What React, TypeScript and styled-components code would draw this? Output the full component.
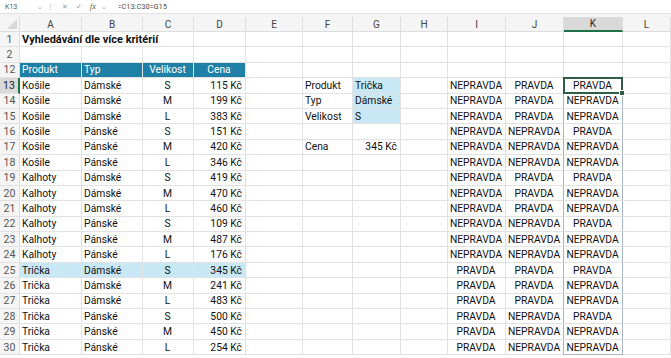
import styled, { createGlobalStyle, css } from "styled-components";

const Global = createGlobalStyle`
  html, body { margin: 0; padding: 0; background: #fff; }
  body { font-family: Roboto, "Liberation Sans", sans-serif; }
`;

const COLS = "20px 62px 61px 51px 52px 57px 50px 48px 47px 58px 58px 59px 1fr";
const ROW_H = "15.4px";

const Sheet = styled.div`
  width: 671px;
  height: 358px;
  overflow: hidden;
  background: #fff;
  display: flex;
  flex-direction: column;
`;

const FormulaBar = styled.div`
  height: 13px;
  display: flex;
  align-items: center;
  border-bottom: 1px solid #e3e3e3;
  font-size: 7px;
  color: #444;
  background: #fff;
`;

const NameBox = styled.div`
  width: 38px;
  padding-left: 5px;
  display: flex;
  align-items: center;
  justify-content: space-between;
  color: #555;
`;

const BarIcon = styled.span<{ $italic?: boolean }>`
  color: #9a9a9a;
  font-size: 7px;
  margin: 0 4px;
  ${(p) =>
    p.$italic &&
    css`
      font-family: "Liberation Serif", serif;
      font-style: italic;
      color: #555;
      font-size: 8px;
      margin-right: 1px;
    `}
`;

const Formula = styled.span`
  margin-left: 7px;
  color: #444;
  letter-spacing: 0.2px;
`;

const Strip = styled.div`
  height: 3px;
  background: #f4f4f4;
`;

const Grid = styled.div`
  display: flex;
  flex-direction: column;
`;

const Row = styled.div`
  display: grid;
  grid-template-columns: ${COLS};
  height: ${ROW_H};
`;

const HeadRow = styled(Row)`
  height: 15px;
`;

const ColHead = styled.div<{ $sel?: boolean }>`
  background: ${(p) => (p.$sel ? "#d9d9d9" : "#f5f5f5")};
  border-right: 1px solid #dddddd;
  border-bottom: ${(p) => (p.$sel ? "2px solid #1e7145" : "1px solid #dddddd")};
  box-sizing: border-box;
  display: flex;
  align-items: center;
  justify-content: center;
  font-size: 10px;
  color: ${(p) => (p.$sel ? "#222" : "#444")};
`;

const Corner = styled.div`
  background: #f5f5f5;
  border-right: 1px solid #dddddd;
  border-bottom: 1px solid #dddddd;
  box-sizing: border-box;
  position: relative;
  &::after {
    content: "";
    position: absolute;
    right: 2px;
    bottom: 2px;
    width: 0;
    height: 0;
    border-left: 10px solid transparent;
    border-bottom: 10px solid #d8d8d8;
  }
`;

const RowHead = styled.div<{ $sel?: boolean }>`
  background: ${(p) => (p.$sel ? "#d9d9d9" : "#f5f5f5")};
  border-right: ${(p) => (p.$sel ? "2px solid #1e7145" : "1px solid #dddddd")};
  border-bottom: 1px solid #e2e2e2;
  box-sizing: border-box;
  display: flex;
  align-items: center;
  justify-content: center;
  font-size: 10.5px;
  color: ${(p) => (p.$sel ? "#222" : "#555")};
`;

type Align = "left" | "center" | "right";

const Cell = styled.div<{
  $align?: Align;
  $bg?: string;
  $color?: string;
  $bold?: boolean;
  $span?: number;
  $outline?: boolean;
  $last?: boolean;
  $active?: boolean;
}>`
  box-sizing: border-box;
  grid-column: span ${(p) => p.$span || 1};
  border-right: 1px solid #e2e2e2;
  border-bottom: 1px solid #e2e2e2;
  background: ${(p) => p.$bg || "#fff"};
  color: ${(p) => p.$color || "#111"};
  font-size: ${(p) => (p.$bold ? "11px" : "10.3px")};
  font-weight: ${(p) => (p.$bold ? 700 : 400)};
  display: flex;
  align-items: center;
  justify-content: ${(p) =>
    p.$align === "center" ? "center" : p.$align === "right" ? "flex-end" : "flex-start"};
  padding: 0 3px 0 2px;
  white-space: nowrap;
  position: relative;
  ${(p) =>
    p.$outline &&
    css`
      border-left: 1px solid #a9b6c6;
      border-right: 1px solid #a9b6c6;
      margin-left: -1px;
    `}
  ${(p) =>
    p.$last &&
    css`
      border-bottom: 1px solid #a9b6c6;
    `}
  ${(p) =>
    p.$active &&
    css`
      &::after {
        content: "";
        position: absolute;
        inset: -1px;
        border: 2px solid #2f5d45;
        pointer-events: none;
      }
      &::before {
        content: "";
        position: absolute;
        right: -3px;
        bottom: -3px;
        width: 4px;
        height: 4px;
        background: #2f5d45;
        border: 1px solid #fff;
        z-index: 2;
      }
    `}
`;

const TEAL = "#1f80a7";
const LIGHT = "#c9e8f5";

const letters = ["A", "B", "C", "D", "E", "F", "G", "H", "I", "J", "K", "L"];

const data: [string, string, string, number][] = [
  ["Košile", "Dámské", "S", 115],
  ["Košile", "Dámské", "M", 199],
  ["Košile", "Dámské", "L", 383],
  ["Košile", "Pánské", "S", 151],
  ["Košile", "Pánské", "M", 420],
  ["Košile", "Pánské", "L", 346],
  ["Kalhoty", "Dámské", "S", 419],
  ["Kalhoty", "Dámské", "M", 470],
  ["Kalhoty", "Dámské", "L", 460],
  ["Kalhoty", "Pánské", "S", 109],
  ["Kalhoty", "Pánské", "M", 487],
  ["Kalhoty", "Pánské", "L", 176],
  ["Trička", "Dámské", "S", 345],
  ["Trička", "Dámské", "M", 241],
  ["Trička", "Dámské", "L", 483],
  ["Trička", "Pánské", "S", 500],
  ["Trička", "Pánské", "M", 450],
  ["Trička", "Pánské", "L", 254],
];

const criteria: Record<number, [string, string, Align]> = {
  13: ["Produkt", "Trička", "left"],
  14: ["Typ", "Dámské", "left"],
  15: ["Velikost", "S", "left"],
  17: ["Cena", "345 Kč", "right"],
};

const bool = (b: boolean) => (b ? "PRAVDA" : "NEPRAVDA");

function Blank({ n }: { n: number }) {
  return (
    <>
      {Array.from({ length: n }).map((_, i) => (
        <Cell key={i} />
      ))}
    </>
  );
}

export default function App() {
  return (
    <Sheet>
      <Global />
      <FormulaBar>
        <NameBox>
          <span>K13</span>
          <span style={{ color: "#999" }}>⌄</span>
        </NameBox>
        <BarIcon>⋮</BarIcon>
        <BarIcon>✕</BarIcon>
        <BarIcon>✓</BarIcon>
        <BarIcon $italic>fx</BarIcon>
        <BarIcon>⌄</BarIcon>
        <Formula>=C13:C30=G15</Formula>
      </FormulaBar>
      <Strip />
      <Grid>
        <HeadRow>
          <Corner />
          {letters.map((l) => (
            <ColHead key={l} $sel={l === "K"}>
              {l}
            </ColHead>
          ))}
        </HeadRow>

        <Row>
          <RowHead>1</RowHead>
          <Cell $bold $span={3}>Vyhledávání dle více kritérií</Cell>
          <Blank n={9} />
        </Row>
        <Row>
          <RowHead>2</RowHead>
          <Blank n={12} />
        </Row>
        <Row>
          <RowHead>12</RowHead>
          <Cell $bg={TEAL} $color="#fff">Produkt</Cell>
          <Cell $bg={TEAL} $color="#fff">Typ</Cell>
          <Cell $bg={TEAL} $color="#fff" $align="center">Velikost</Cell>
          <Cell $bg={TEAL} $color="#fff" $align="center">Cena</Cell>
          <Blank n={8} />
        </Row>

        {data.map(([prod, typ, size, price], i) => {
          const r = 13 + i;
          const hl = r === 25 ? LIGHT : undefined;
          const crit = criteria[r];
          return (
            <Row key={r}>
              <RowHead $sel={r === 13}>{r}</RowHead>
              <Cell $bg={hl}>{prod}</Cell>
              <Cell $bg={hl}>{typ}</Cell>
              <Cell $bg={hl} $align="center">{size}</Cell>
              <Cell $bg={hl} $align="right">{price} Kč</Cell>
              <Cell />
              <Cell>{crit ? crit[0] : ""}</Cell>
              <Cell $bg={r >= 13 && r <= 15 ? LIGHT : undefined} $align={crit ? crit[2] : "left"}>
                {crit ? crit[1] : ""}
              </Cell>
              <Cell />
              <Cell $align="center">{bool(prod === "Trička")}</Cell>
              <Cell $align="center">{bool(typ === "Dámské")}</Cell>
              <Cell $align="center" $outline $last={r === 30} $active={r === 13}>
                {bool(size === "S")}
              </Cell>
              <Cell />
            </Row>
          );
        })}
      </Grid>
    </Sheet>
  );
}
